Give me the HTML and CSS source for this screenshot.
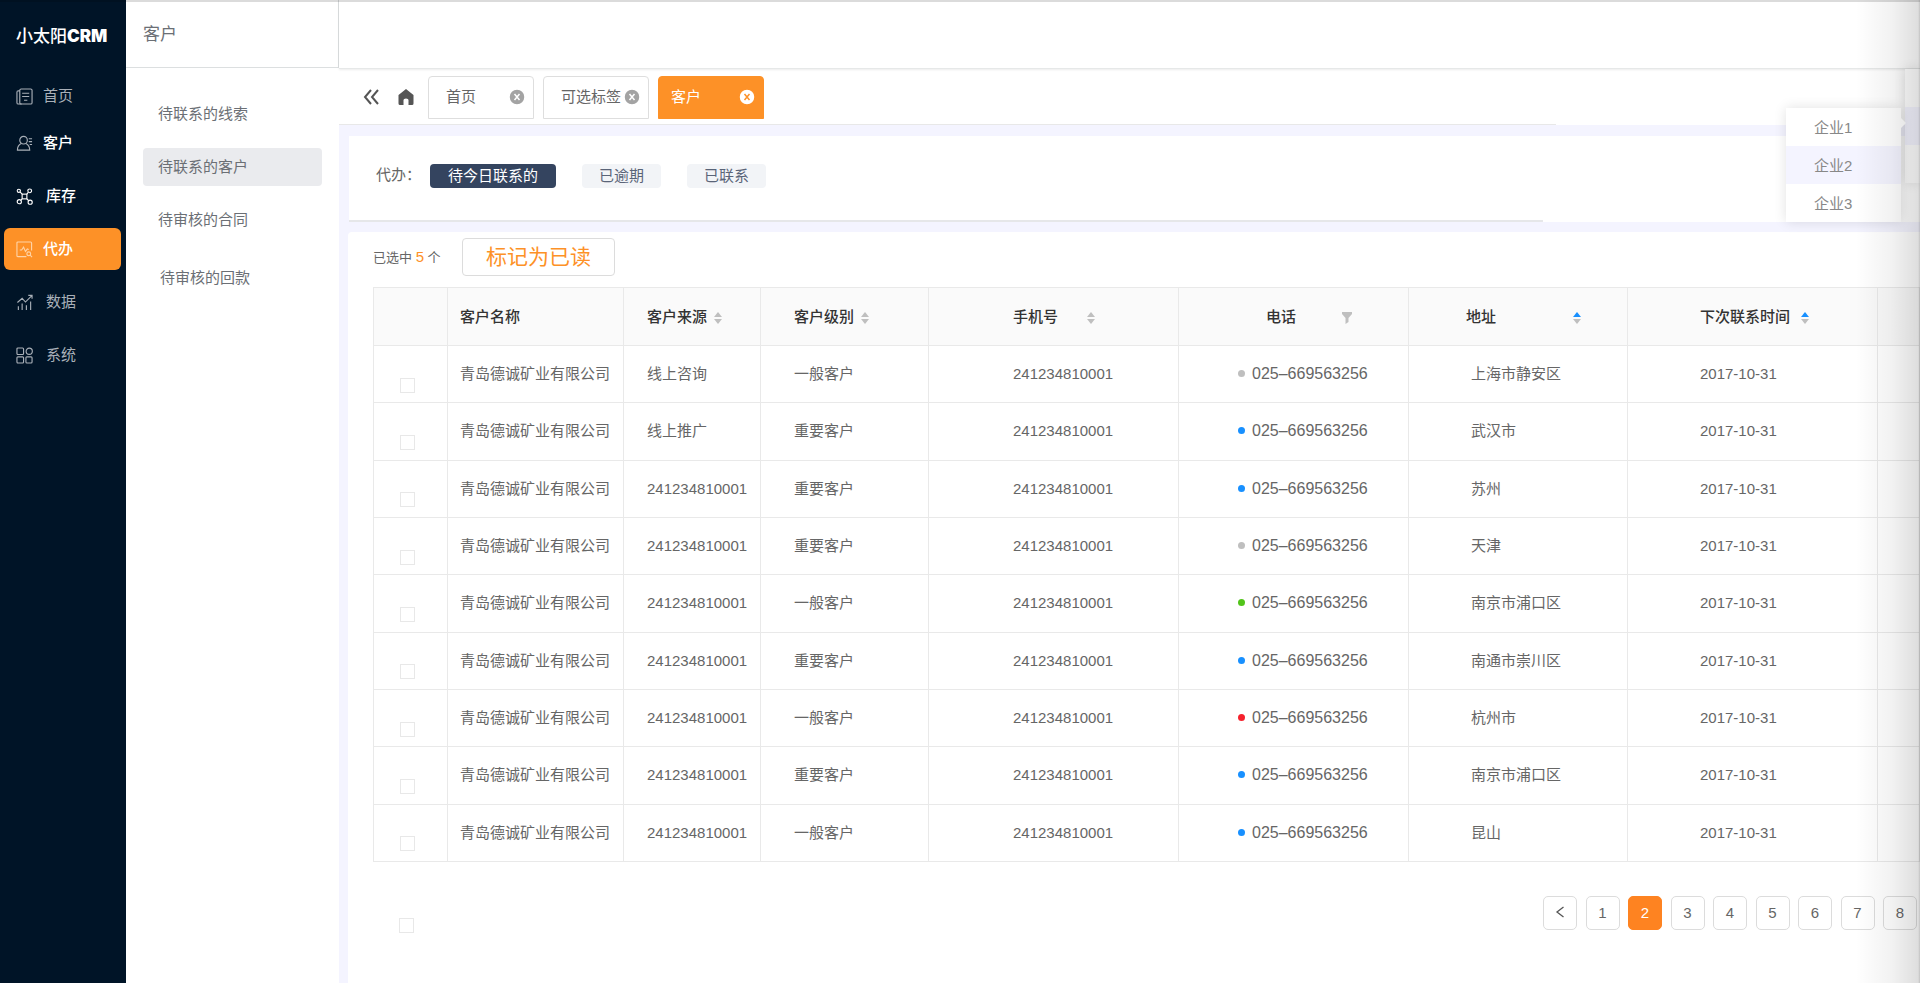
FILE: index.html
```html
<!DOCTYPE html>
<html lang="zh-CN">
<head>
    <meta charset="UTF-8">
    <meta name="viewport" content="width=device-width, initial-scale=1.0">
    <title>小太阳CRM</title>
    <link rel="stylesheet" href="styles.css">
</head>
<body>
    <!-- --- SIDEBAR --- -->
    <aside class="sidebar">
        <div class="logo">小太阳<b>CRM</b></div>
        <nav class="nav">
            <a href="#" class="nav-item first">
                <svg class="nav-icon" viewBox="0 0 18 18"><rect x="4" y="1" width="13" height="16" rx="1.5"/><path d="M4 3H2.500Q1 3 1 4.500V15.500Q1 17 2.500 17H6M6.500 5.500H14M6.500 9H14M8.500 13H12"/></svg>
                首页
            </a>
            <a href="#" class="nav-item strong">
                <svg class="nav-icon" viewBox="0 0 18 18"><circle cx="8" cy="5.500" r="4"/><path d="M5.500 9Q1.500 11 1.500 16H14.500Q14.500 11 10.500 9M13.500 4H17M13.500 7H17M14.500 10H17"/></svg>
                客户
            </a>
            <a href="#" class="nav-item strong white wide">
                <svg class="nav-icon" viewBox="0 0 18 18"><circle cx="3" cy="3" r="1.700"/><circle cx="14.500" cy="3" r="2"/><circle cx="3.500" cy="14.500" r="2.200"/><circle cx="15" cy="15" r="2.200"/><rect x="6.500" y="6.500" width="5" height="5"/><path d="M4.200 4.200L6.500 6.500M13 4.500L11.500 6.500M5 13L6.500 11.500M11.500 11.500L13.500 13.500"/></svg>
                库存
            </a>
            <a href="#" class="nav-item strong active">
                <svg class="nav-icon" viewBox="0 0 18 18"><path d="M11 16.500H2Q1 16.500 1 15.500V2Q1 1 2 1H15.500Q16.500 1 16.500 2V10M4 9.500H6L8 6.500L10 11L12 8.500L13.500 9"/><circle cx="13.500" cy="13.500" r="2"/><path d="M15 15L17 17"/></svg>
                代办
            </a>
            <a href="#" class="nav-item wide">
                <svg class="nav-icon" viewBox="0 0 18 18"><path d="M1.500 9L6.500 4.500L10 8.500L16.500 2M13 1.500H17V5M2.500 13V17M6.500 10V17M11 12V17M15.500 8V17"/></svg>
                数据
            </a>
            <a href="#" class="nav-item wide">
                <svg class="nav-icon" viewBox="0 0 18 18"><rect x="1" y="1" width="7" height="7" rx="1"/><circle cx="14" cy="4.500" r="3.300"/><rect x="1" y="10.500" width="7" height="6.500" rx="1"/><rect x="10.500" y="10.500" width="6.500" height="6.500" rx="1"/></svg>
                系统
            </a>
        </nav>
    </aside>

    <!-- --- SUB MENU --- -->
    <aside class="submenu">
        <h1 class="submenu-title">客户</h1>
        <nav class="submenu-list">
            <a href="#">待联系的线索</a>
            <a href="#" class="active">待联系的客户</a>
            <a href="#">待审核的合同</a>
            <a href="#" class="last">待审核的回款</a>
        </nav>
    </aside>

    <!-- --- MAIN --- -->
    <main class="main">
        <header class="topbar"></header>

        <div class="tabs">
            <button class="icon-btn" aria-label="收起"><svg width="16" height="16" viewBox="0 0 16 16"><path d="M8 1L2 8L8 15M15 1L9 8L15 15" fill="none" stroke="#555" stroke-width="2"/></svg></button>
            <button class="icon-btn" aria-label="主页"><svg width="18" height="18" viewBox="0 0 18 18"><path d="M9 1L16.500 7V15.500Q16.500 17 15 17H11.500V12Q11.500 10.500 9 10.500T6.500 12V17H3Q1.500 17 1.500 15.500V7Z" fill="#555"/></svg></button>
            <button class="tab">首页 <svg class="close" viewBox="0 0 16 16"><circle cx="8" cy="8" r="8"/><path d="M5.500 5L10.500 11M10.500 5L5.500 11"/></svg></button>
            <button class="tab">可选标签 <svg class="close" viewBox="0 0 16 16"><circle cx="8" cy="8" r="8"/><path d="M5.500 5L10.500 11M10.500 5L5.500 11"/></svg></button>
            <button class="tab active">客户 <svg class="close" viewBox="0 0 16 16"><circle cx="8" cy="8" r="8"/><path d="M5.500 5L10.500 11M10.500 5L5.500 11"/></svg></button>
        </div>

        <section class="filter">
            <span>代办：</span>
            <button class="tag active">待今日联系的</button>
            <button class="tag">已逾期</button>
            <button class="tag">已联系</button>
        </section>

        <section class="panel">
            <div class="toolbar">
                <span class="selected">已选中 <em>5</em> 个</span>
                <button class="mark-btn">标记为已读</button>
            </div>

            <table class="customers">
                <colgroup>
                    <col class="w-check"><col class="w-name"><col class="w-source"><col class="w-level"><col class="w-mobile"><col class="w-phone"><col class="w-address"><col class="w-date"><col>
                </colgroup>
                <thead>
                    <tr>
                        <th></th>
                        <th>客户名称</th>
                        <th class="source">客户来源<i class="sort"></i></th>
                        <th class="level">客户级别<i class="sort"></i></th>
                        <th class="mobile">手机号<i class="sort far"></i></th>
                        <th class="phone-head">电话<svg class="funnel" viewBox="0 0 10 12"><path d="M0 0H10V2L6.500 6V10L3.500 12V6L0 2Z"/></svg></th>
                        <th class="address-head">地址<i class="sort up"></i></th>
                        <th class="date">下次联系时间<i class="sort up"></i></th>
                        <th></th>
                    </tr>
                </thead>
                <tbody id="rows"></tbody>
            </table>

            <div class="footer">
                <input type="checkbox" aria-label="全选">
                <nav class="pager">
                    <button aria-label="上一页"><svg width="10" height="12" viewBox="0 0 10 12"><path d="M8.500 1L2 6L8.500 11" fill="none" stroke="#555" stroke-width="1.300"/></svg></button>
                    <button>1</button>
                    <button class="active">2</button>
                    <button>3</button>
                    <button>4</button>
                    <button>5</button>
                    <button>6</button>
                    <button>7</button>
                    <button>8</button>
                </nav>
            </div>
        </section>
    </main>

    <!-- --- COMPANY MENU --- -->
    <div class="parent-menu"><span></span><span class="hover"></span><span></span></div>
    <div class="company-menu">
        <a href="#">企业1</a>
        <a href="#" class="hover">企业2</a>
        <a href="#">企业3</a>
    </div>
    <div class="edge-shadow"></div>

    <script>
        // source, level, phone status, address
        const customers = [
            ["线上咨询", "一般客户", "gray", "上海市静安区"],
            ["线上推广", "重要客户", "blue", "武汉市"],
            ["241234810001", "重要客户", "blue", "苏州"],
            ["241234810001", "重要客户", "gray", "天津"],
            ["241234810001", "一般客户", "green", "南京市浦口区"],
            ["241234810001", "重要客户", "blue", "南通市崇川区"],
            ["241234810001", "一般客户", "red", "杭州市"],
            ["241234810001", "重要客户", "blue", "南京市浦口区"],
            ["241234810001", "一般客户", "blue", "昆山"]
        ];

        document.getElementById("rows").innerHTML = customers.map(([source, level, status, address], i) => `
            <tr>
                <td class="check"><input type="checkbox" aria-label="选择第${i + 1}行"></td>
                <td>青岛德诚矿业有限公司</td>
                <td class="source">${source}</td>
                <td class="level">${level}</td>
                <td class="mobile">241234810001</td>
                <td class="phone"><i class="dot ${status}"></i>025–669563256</td>
                <td class="address">${address}</td>
                <td class="date">2017-10-31</td>
                <td></td>
            </tr>`).join("");
    </script>
</body>
</html>
```
FILE: styles.css
```css
/* --- RESET & GLOBAL STYLES --- */
* {
    margin: 0;
    padding: 0;
    box-sizing: border-box;
}

body {
    position: relative;
    display: flex;
    min-height: 100vh;
    overflow-x: hidden;
    background-color: #f4f4ff;
    font-family: "Liberation Sans", "Noto Sans CJK SC", sans-serif;
    font-size: 15px;
    line-height: 22px;
    color: #666;
}

/* thin shade along the top of the window */
body::before {
    content: "";
    position: absolute;
    inset: 0 0 auto 0;
    z-index: 4;
    height: 2px;
    background-color: rgba(0, 0, 0, 0.14);
}

button {
    font: inherit;
    color: inherit;
    background: none;
    border: none;
    cursor: pointer;
}

a {
    color: inherit;
    text-decoration: none;
}

/* --- SIDEBAR --- */
.sidebar {
    flex: 0 0 126px;
    background-color: #001427;
    color: #a9b0b8;
}

.logo {
    padding: 25px 0 0 16px;
    font-size: 17px;
    font-weight: 500;
    color: #fff;
    white-space: nowrap;
}

.logo b {
    font-family: Inter, sans-serif;
    font-weight: 900;
}

.nav {
    display: flex;
    flex-direction: column;
    gap: 11px;
    padding: 33px 5px 0 4px;
}

.nav-item {
    display: flex;
    align-items: center;
    gap: 10px;
    height: 42px;
    padding-left: 12px;
    border-radius: 6px;
}

.nav-item.first {
    height: 30px;
}

.nav-item.wide {
    gap: 13px;
}

.nav-item.strong {
    font-weight: 500;
    color: #fff;
}

.nav-item.active {
    background-color: #fd9127;
}

.nav-icon {
    width: 17px;
    height: 17px;
    fill: none;
    stroke: #a9b0b8;
    stroke-width: 1.2;
}

.white .nav-icon {
    stroke: #fff;
}

.active .nav-icon {
    stroke: #ffd3a6;
}

/* --- SUB MENU --- */
.submenu {
    flex: 0 0 213px;
    background-color: #fff;
    color: #6b6f75;
}

.submenu-title {
    height: 68px;
    padding: 24px 17px 0;
    border-right: 1px solid #dcdfe0;
    border-bottom: 1px solid #dcdfe0;
    font-size: 17px;
    font-weight: 400;
}

.submenu-list {
    display: flex;
    flex-direction: column;
    gap: 15px;
    padding: 27px 17px 0 17px;
}

.submenu-list a {
    padding: 8px 15px;
    border-radius: 4px;
}

.submenu-list .active {
    background-color: #eaebee;
}

.submenu-list .last {
    margin-top: 5px;
    padding-left: 17px;
}

/* --- MAIN --- */
.main {
    flex: 1;
    min-width: 0;
    display: flex;
    flex-direction: column;
}

.topbar {
    height: 69px;
    background-color: #fff;
    border-bottom: 1px solid #e6e8e8;
    box-shadow: 0 1px 2px rgba(0, 0, 0, 0.08);
    z-index: 1;
}

.tabs {
    display: flex;
    align-items: center;
    gap: 9px;
    height: 56px;
    padding-left: 24px;
    background: linear-gradient(#e8e8e8, #e8e8e8) left bottom / 77% 1px no-repeat #fff;
}

.icon-btn {
    display: flex;
    margin-right: 9px;
}

.icon-btn + .icon-btn {
    margin-right: 4px;
}

.tab {
    display: flex;
    align-items: center;
    justify-content: space-between;
    width: 106px;
    height: 43px;
    padding: 0 8px 0 17px;
    border: 1px solid #dedede;
    border-radius: 4px 4px 0 0;
    white-space: nowrap;
}

.tab.active {
    padding: 0 8px 0 12px;
    background-color: #fd9127;
    border-color: #fd9127;
    color: #fff;
}

.close {
    flex: none;
    width: 16px;
    height: 16px;
    fill: #a3a3a3;
    stroke: #fff;
    stroke-width: 1.5;
}

.active .close {
    fill: #fff;
    stroke: #fd9127;
}

.filter {
    display: flex;
    align-items: flex-start;
    gap: 26px;
    height: 86px;
    margin: 11px 0 0 10px;
    padding: 28px 27px;
    background: linear-gradient(#e6e7e9, #e6e7e9) left bottom / 76% 2px no-repeat #fff;
}

.filter span {
    width: 28px;
    white-space: nowrap;
}

.tag {
    height: 24px;
    padding: 0 17px;
    border-radius: 4px;
    background-color: #f2f4f7;
    color: #5a6478;
}

.tag.active {
    padding: 0 18px;
    background-color: #34445f;
    color: #fff;
}

.panel {
    flex: 1;
    margin: 10px 0 0 9px;
    padding: 6px 0 0 25px;
    background-color: #fff;
    border-radius: 4px 0 0 0;
}

.toolbar {
    display: flex;
    align-items: center;
    height: 49px;
    padding-bottom: 11px;
}

.selected {
    width: 89px;
    font-size: 13px;
}

.selected em {
    font-size: 15px;
    font-style: normal;
    color: #fd9127;
}

.mark-btn {
    width: 153px;
    height: 38px;
    border: 1px solid #dcdcdc;
    border-radius: 4px;
    font-size: 21px;
    color: #fd9127;
}

/* --- TABLE --- */
.customers {
    width: 100%;
    height: 575px;
    table-layout: fixed;
    border-collapse: collapse;
}

.customers th,
.customers td {
    padding: 0 0 0 12px;
    border: 1px solid #e9e9e9;
    text-align: left;
    white-space: nowrap;
}

.customers th {
    height: 58px;
    background-color: #fafafa;
    font-weight: 500;
    color: #333;
}

.w-check { width: 74px; }
.w-name { width: 176px; }
.w-source { width: 137px; }
.w-level { width: 168px; }
.w-mobile { width: 250px; }
.w-phone { width: 230px; }
.w-address { width: 219px; }
.w-date { width: 250px; }

.customers .source { padding-left: 23px; }
.customers .level { padding-left: 33px; }
.customers .mobile { padding-left: 84px; }
.customers .phone { padding-left: 59px; font-size: 16px; }
.customers .phone-head { padding-left: 87px; }
.customers .address { padding-left: 62px; }
.customers .address-head { padding-left: 57px; }
.customers .date { padding-left: 72px; }

.customers .check {
    padding: 22px 0 0 26px;
    line-height: 0;
}

input[type="checkbox"] {
    appearance: none;
    width: 15px;
    height: 15px;
    border: 1px solid #e8e8e8;
    background-color: #fff;
}

/* sort arrows */
.sort {
    display: inline-flex;
    flex-direction: column;
    gap: 2px;
    margin-left: 7px;
    vertical-align: middle;
}

.sort::before,
.sort::after {
    content: "";
    border: 4px solid transparent;
}

.sort::before {
    border-top: none;
    border-bottom: 5px solid #bfbfbf;
}

.sort::after {
    border-bottom: none;
    border-top: 5px solid #bfbfbf;
}

.sort.up::before {
    border-bottom-color: #1890ff;
}

.sort.far {
    margin-left: 29px;
}

.address-head .sort {
    margin-left: 77px;
}

.date .sort {
    margin-left: 11px;
}

.funnel {
    width: 10px;
    height: 12px;
    margin-left: 46px;
    vertical-align: middle;
    fill: #bfbfbf;
}

.dot {
    display: inline-block;
    width: 7px;
    height: 7px;
    margin-right: 7px;
    border-radius: 50%;
    vertical-align: 2px;
}

.dot.gray { background-color: #bfbfbf; }
.dot.blue { background-color: #1890ff; }
.dot.green { background-color: #52c41a; }
.dot.red { background-color: #f5222d; }

/* --- PAGER --- */
.footer {
    display: flex;
    justify-content: space-between;
    padding: 34px 3px 0 26px;
}

.footer input {
    margin-top: 22px;
}

.pager {
    display: flex;
    justify-content: space-between;
    width: 374px;
}

.pager button {
    width: 34px;
    height: 34px;
    border: 1px solid #dcdcdc;
    border-radius: 5px;
}

.pager .active {
    background-color: #fe8321;
    border-color: #fe8321;
    color: #fff;
}

/* --- COMPANY MENU --- */
.company-menu,
.parent-menu {
    position: absolute;
    z-index: 2;
    background-color: #fff;
    box-shadow: 0 0 12px rgba(0, 0, 0, 0.12);
}

.company-menu {
    top: 108px;
    right: 19px;
    width: 115px;
    color: #888;
}

.company-menu::after {
    content: "";
    position: absolute;
    top: 10px;
    left: 100%;
    border: 5px solid transparent;
    border-left-color: #fff;
    border-right: none;
}

.company-menu a {
    display: block;
    padding: 9px 28px 7px;
}

.parent-menu {
    top: 69px;
    right: 0;
    width: 15px;
}

.parent-menu span {
    display: block;
    height: 38px;
}

.hover {
    background-color: #f4f4ff;
}

.edge-shadow {
    position: absolute;
    inset: 0 0 0 auto;
    z-index: 3;
    width: 64px;
    background: linear-gradient(to right, transparent, rgba(0, 0, 0, 0.05) 55%, rgba(0, 0, 0, 0.13) 97%, rgba(0, 0, 0, 0.24));
    pointer-events: none;
}
```
